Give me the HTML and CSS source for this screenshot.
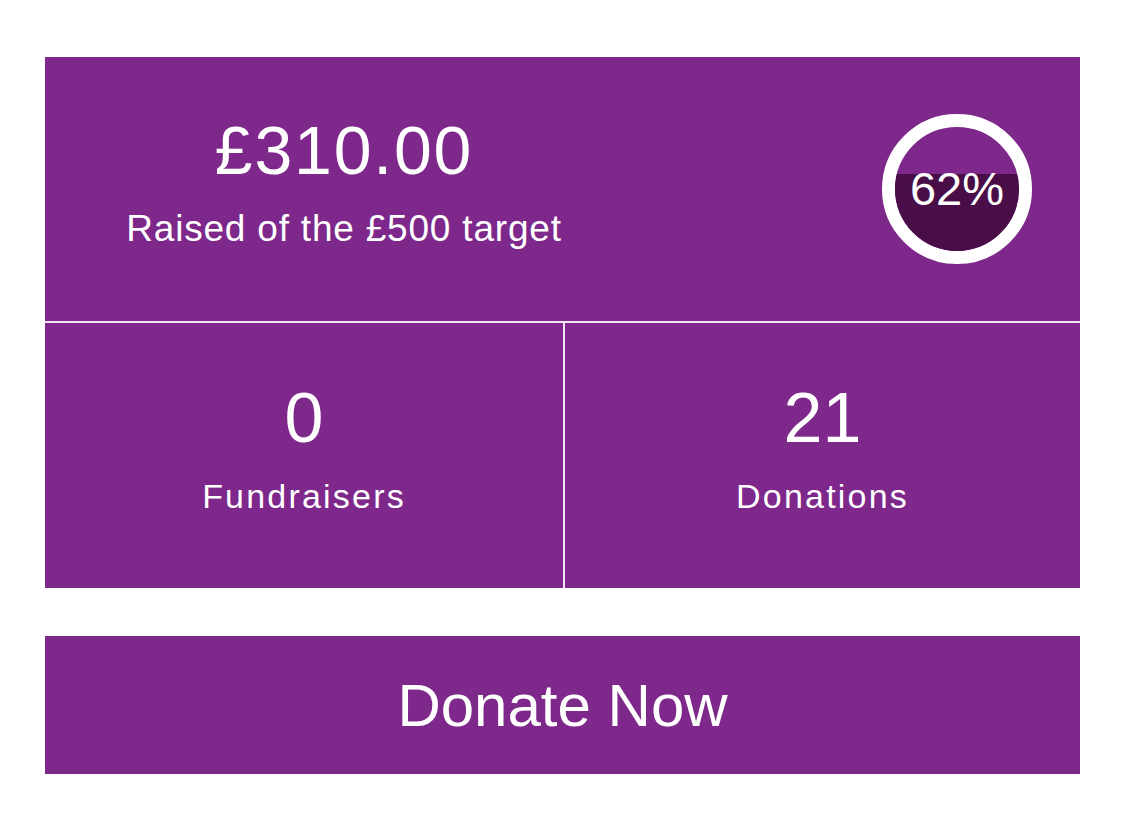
FILE: index.html
```html
<!DOCTYPE html>
<html lang="en">
<head>
<meta charset="utf-8">
<title>Fundraising</title>
<link rel="stylesheet" href="styles.css">
</head>
<body>
<main class="page">
  <section class="card">
    <div class="summary">
      <div class="raised">
        <div class="amount">£310.00</div>
        <div class="target">Raised of the £500 target</div>
      </div>
      <div class="progress">
        <div class="fill" style="height: 62%"></div>
        <span class="pct">62%</span>
      </div>
    </div>
    <div class="stats">
      <div class="stat">
        <div class="num">0</div>
        <div class="label">Fundraisers</div>
      </div>
      <div class="stat">
        <div class="num">21</div>
        <div class="label">Donations</div>
      </div>
    </div>
  </section>
  <a class="donate" href="#">Donate Now</a>
</main>
</body>
</html>
```

FILE: styles.css
```css
* { box-sizing: border-box; }
html, body { margin: 0; padding: 0; background: #ffffff; }
body {
  font-family: "Liberation Sans", Arial, Helvetica, sans-serif;
  color: #ffffff;
}
.page {
  padding: 57px 45px 0 45px;
  display: flex;
  flex-direction: column;
  gap: 48px;
}
.card {
  display: flex;
  flex-direction: column;
  gap: 2px;
  background-color: #f3e4f3;
}
.summary {
  background: #7e288b;
  height: 264px;
  display: flex;
  align-items: center;
  padding-right: 48px;
}
.raised {
  align-self: flex-start;
  width: 598px;
  text-align: center;
  padding-top: 59px;
}
.amount {
  font-size: 68px;
  line-height: 68px;
  letter-spacing: 1.8px;
}
.target {
  font-size: 37px;
  line-height: 40px;
  letter-spacing: 0.8px;
  margin-top: 25px;
}
.progress {
  margin-left: auto;
  width: 150px;
  height: 150px;
  border: 13px solid #ffffff;
  border-radius: 50%;
  overflow: hidden;
  position: relative;
  display: flex;
  align-items: center;
  justify-content: center;
}
.fill {
  position: absolute;
  left: 0;
  right: 0;
  bottom: 0;
  background: #490d47;
}
.pct {
  position: relative;
  font-size: 47px;
  line-height: 1;
  margin-top: -2px;
}
.stats {
  display: grid;
  grid-template-columns: 518px 1fr;
  gap: 2px;
  height: 265px;
}
.stat {
  background: #7e288b;
  display: flex;
  flex-direction: column;
  align-items: center;
  padding-top: 60px;
}
.num {
  font-size: 70px;
  line-height: 70px;
}
.label {
  font-size: 34px;
  line-height: 40px;
  letter-spacing: 2.2px;
  margin-top: 23px;
}
.donate {
  display: flex;
  align-items: center;
  justify-content: center;
  height: 138px;
  background: #7e288b;
  color: #ffffff;
  text-decoration: none;
  font-size: 60px;
}
```
